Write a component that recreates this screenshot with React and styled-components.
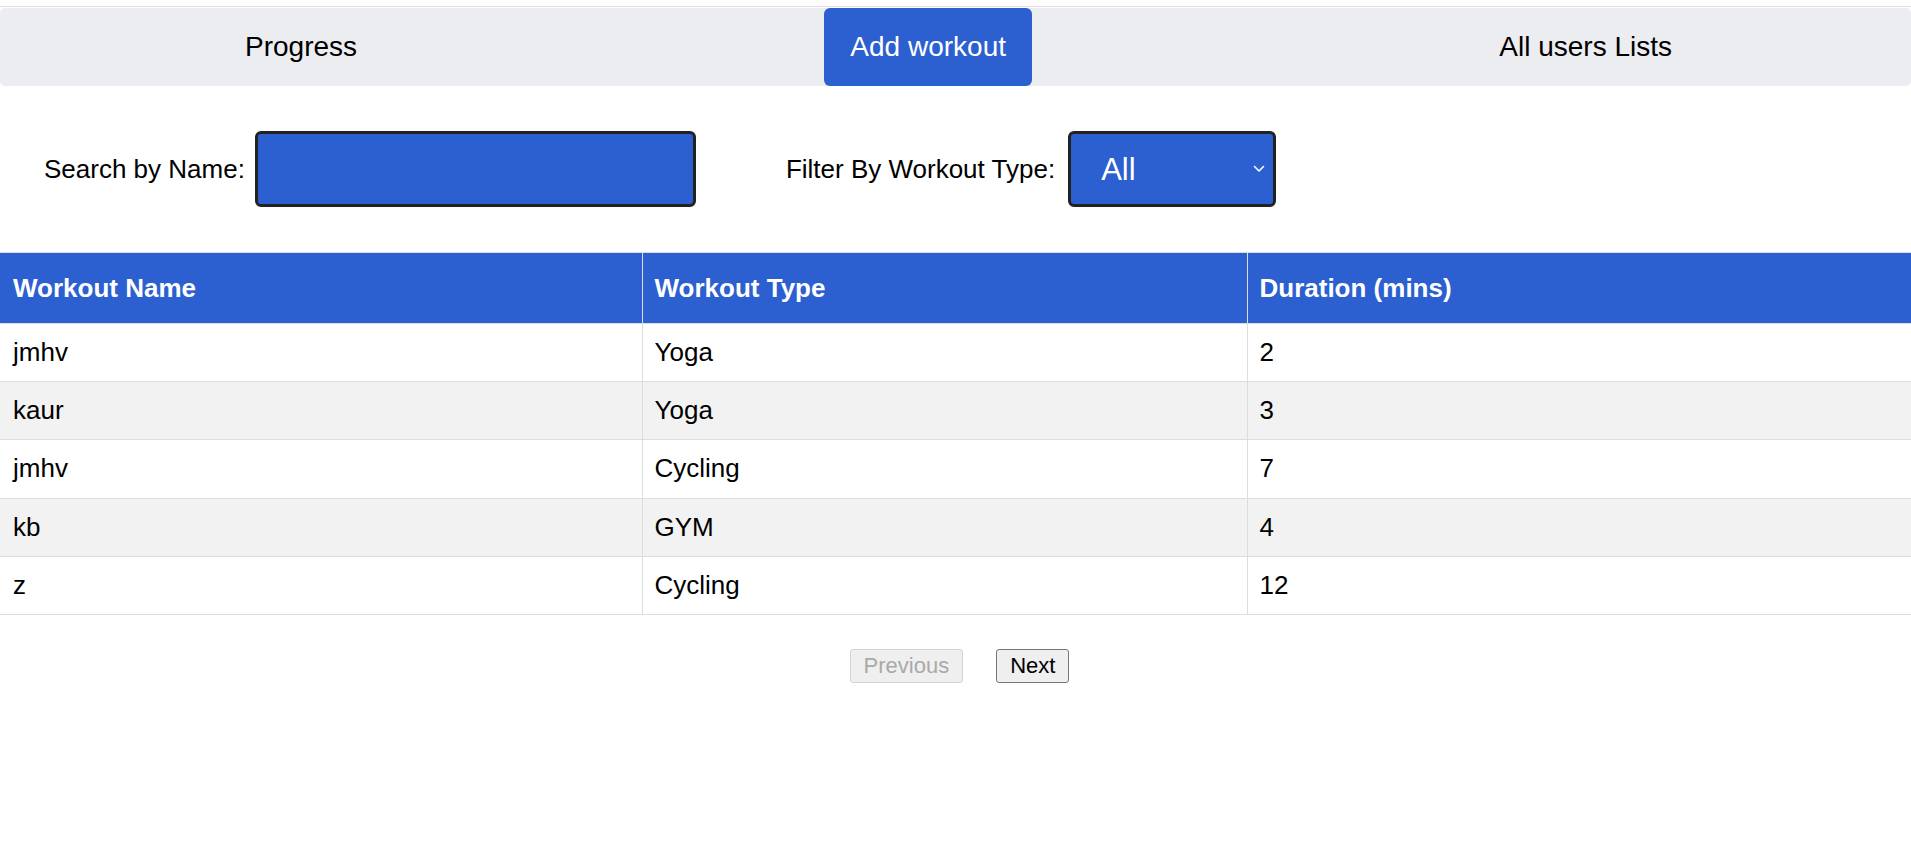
import React, { useState } from "react";
import styled, { createGlobalStyle } from "styled-components";

const GlobalStyle = createGlobalStyle`
  body {
    margin: 0;
    background: #fff;
    font-family: "Liberation Sans", Arial, sans-serif;
    color: #000;
  }
`;

const PageContainer = styled.div`
  padding-top: 6px;
`;

const Header = styled.header`
  border-top: 1px solid #dcdee2;
  padding-top: 1px;
`;

const NavBar = styled.nav`
  display: flex;
  justify-content: space-between;
  align-items: stretch;
  height: 78px;
  padding: 0 213px 0 219px;
  background: #ecedf1;
  border-radius: 5px;
`;

const NavTab = styled.button`
  display: flex;
  align-items: center;
  padding: 0 26px;
  border: none;
  border-radius: 6px;
  font-family: inherit;
  font-size: 28px;
  background: ${(p) => (p.$active ? "#2c5fd0" : "transparent")};
  color: ${(p) => (p.$active ? "#fff" : "#000")};
  cursor: pointer;
`;

const FilterBar = styled.div`
  display: flex;
  align-items: center;
  gap: 90px;
  padding: 45px 0 45px 44px;
`;

const FilterGroup = styled.div`
  display: flex;
  align-items: center;
  gap: ${(p) => p.$gap || 10}px;
`;

const Label = styled.label`
  font-size: 26px;
`;

const SearchInput = styled.input`
  box-sizing: border-box;
  width: 441px;
  height: 76px;
  background: #2c5fd0;
  border: 3px solid #222;
  border-radius: 6px;
  color: #fff;
  font-size: 26px;
  padding: 0 14px;
  outline: none;
`;

const SelectWrap = styled.div`
  position: relative;
  display: flex;

  svg {
    position: absolute;
    right: 11px;
    top: 50%;
    transform: translateY(-50%);
    pointer-events: none;
  }
`;

const Select = styled.select`
  box-sizing: border-box;
  width: 208px;
  height: 76px;
  appearance: none;
  background: #2c5fd0;
  border: 3px solid #222;
  border-radius: 6px;
  color: #fff;
  font-family: inherit;
  font-size: 31px;
  padding: 0 30px 0 30px;
  outline: none;
`;

const Table = styled.table`
  width: 100%;
  border-collapse: collapse;
  table-layout: fixed;

  th,
  td {
    text-align: left;
    padding: 14px 12px;
    font-size: 26px;
    line-height: 29.2px;
    border: 1px solid #ddd;
  }
  th:first-child,
  td:first-child {
    border-left: none;
    padding-left: 13px;
  }
  th:last-child,
  td:last-child {
    border-right: none;
  }
  th {
    background: #2c5fd0;
    color: #fff;
    font-weight: bold;
    padding-top: 20px;
    padding-bottom: 20px;
    line-height: 30px;
  }
  tbody tr:nth-child(even) td {
    background: #f2f2f2;
  }
`;

const Pagination = styled.div`
  display: flex;
  justify-content: center;
  gap: 33px;
  margin-top: 34px;
  padding-left: 8px;
`;

const PageButton = styled.button`
  font-family: inherit;
  font-size: 22px;
  line-height: 24px;
  padding: 4px 13px;
  border-radius: 3px;
  background: #efefef;
  border: 1px solid ${(p) => (p.disabled ? "#d4d4d4" : "#767676")};
  color: ${(p) => (p.disabled ? "#a9a9a9" : "#000")};
`;

const workouts = [
  { name: "jmhv", type: "Yoga", mins: 2 },
  { name: "kaur", type: "Yoga", mins: 3 },
  { name: "jmhv", type: "Cycling", mins: 7 },
  { name: "kb", type: "GYM", mins: 4 },
  { name: "z", type: "Cycling", mins: 12 },
];

const App = () => {
  const [search, setSearch] = useState("");
  const [type, setType] = useState("All");

  return (
    <PageContainer>
      <GlobalStyle />
      <Header>
        <NavBar>
          <NavTab>Progress</NavTab>
          <NavTab $active>Add workout</NavTab>
          <NavTab>All users Lists</NavTab>
        </NavBar>
      </Header>

      <FilterBar>
        <FilterGroup>
          <Label htmlFor="search">Search by Name:</Label>
          <SearchInput
            id="search"
            value={search}
            onChange={(e) => setSearch(e.target.value)}
          />
        </FilterGroup>
        <FilterGroup $gap={13}>
          <Label htmlFor="type">Filter By Workout Type:</Label>
          <SelectWrap>
            <Select
              id="type"
              value={type}
              onChange={(e) => setType(e.target.value)}
            >
              <option>All</option>
              <option>Yoga</option>
              <option>Cycling</option>
              <option>GYM</option>
            </Select>
            <svg width="12" height="8" viewBox="0 0 12 8">
              <path
                d="M1.5 1.5 L6 6 L10.5 1.5"
                fill="none"
                stroke="#fff"
                strokeWidth="1.6"
                strokeLinecap="round"
                strokeLinejoin="round"
              />
            </svg>
          </SelectWrap>
        </FilterGroup>
      </FilterBar>

      <Table>
        <colgroup>
          <col style={{ width: 642 }} />
          <col style={{ width: 605 }} />
          <col />
        </colgroup>
        <thead>
          <tr>
            <th>Workout Name</th>
            <th>Workout Type</th>
            <th>Duration (mins)</th>
          </tr>
        </thead>
        <tbody>
          {workouts.map((w, i) => (
            <tr key={i}>
              <td>{w.name}</td>
              <td>{w.type}</td>
              <td>{w.mins}</td>
            </tr>
          ))}
        </tbody>
      </Table>

      <Pagination>
        <PageButton disabled>Previous</PageButton>
        <PageButton>Next</PageButton>
      </Pagination>
    </PageContainer>
  );
};

export default App;
